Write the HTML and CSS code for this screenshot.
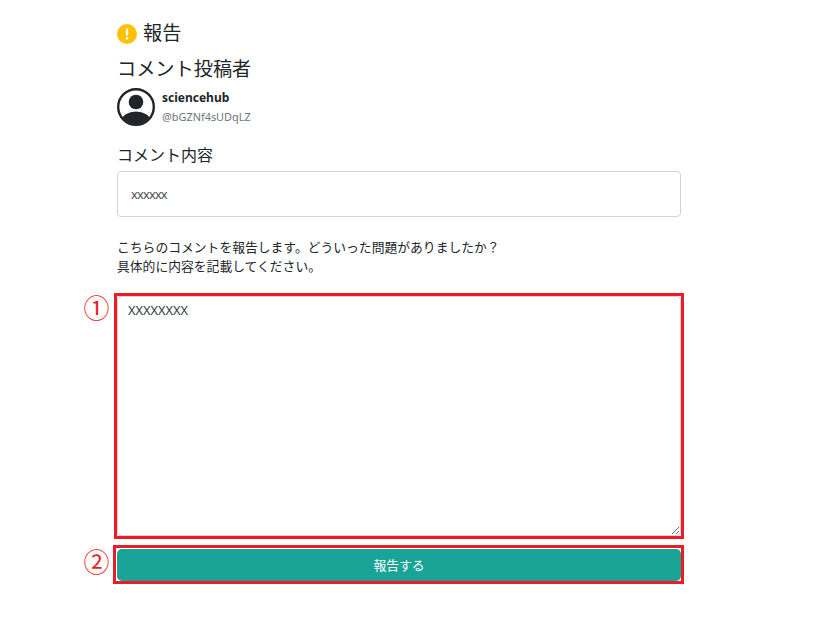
FILE: index.html
```html
<!DOCTYPE html>
<html lang="ja">
<head>
<meta charset="utf-8">
<title>報告</title>
<link rel="stylesheet" href="styles.css">
</head>
<body>
<main class="page">
  <h1 class="title">
    <svg class="warn" viewBox="0 0 20 20" aria-hidden="true"><circle cx="10" cy="10" r="10" fill="#ffc107"/><rect x="8.9" y="4.6" width="2.2" height="7.2" rx="1" fill="#fff"/><circle cx="10" cy="14.4" r="1.3" fill="#fff"/></svg>
    <span class="title-text">報告</span>
  </h1>
  <h2 class="subtitle">コメント投稿者</h2>
  <div class="user">
    <svg class="avatar" viewBox="0 0 38 38" aria-hidden="true">
      <defs><clipPath id="c"><circle cx="19" cy="19" r="17"/></clipPath></defs>
      <circle cx="19" cy="19" r="17.8" fill="#fff" stroke="#212529" stroke-width="2.4"/>
      <circle cx="19" cy="14" r="7.3" fill="#212529"/>
      <ellipse cx="19" cy="33" rx="14.5" ry="9.5" fill="#212529" clip-path="url(#c)"/>
    </svg>
    <div class="names">
      <div class="name">sciencehub</div>
      <div class="handle">@bGZNf4sUDqLZ</div>
    </div>
  </div>
  <h3 class="label">コメント内容</h3>
  <div class="quote">xxxxxx</div>
  <p class="help">こちらのコメントを報告します。どういった問題がありましたか？<br>具体的に内容を記載してください。</p>
  <div class="field">
    <span class="num num-a">①</span>
    <textarea class="report">XXXXXXXX</textarea>
  </div>
  <div class="action">
    <span class="num num-b">②</span>
    <button class="submit" type="button">報告する</button>
  </div>
</main>
</body>
</html>
```

FILE: styles.css
```css
* { box-sizing: border-box; }
html, body { margin: 0; background: #fff; }
body {
  font-family: "Noto Sans", "Noto Sans CJK JP", sans-serif;
  color: #212529;
  font-size: 12.8px;
}
.page {
  width: 564px;
  margin-left: 117px;
  padding-top: 20px;
  display: flex;
  flex-direction: column;
}
.title {
  margin: 0;
  display: flex;
  align-items: center;
  gap: 6px;
  height: 28px;
  font-size: 19.2px;
  font-weight: 400;
  line-height: 26px;
}
.title-text { display: block; height: 28px; }
.warn { width: 20px; height: 20px; }
.subtitle {
  margin: 7px 0 0;
  font-size: 19.2px;
  font-weight: 400;
  line-height: 28px;
}
.user {
  display: flex;
  gap: 7px;
  margin-top: 5px;
  height: 38px;
}
.avatar { width: 38px; height: 38px; flex: none; }
.names { display: flex; flex-direction: column; }
.name { font-size: 12px; font-weight: 700; line-height: 18px; margin-top: 1px; }
.handle { font-size: 10.9px; color: #6c757d; line-height: 16px; margin-top: 2px; }
.label {
  margin: 17px 0 0;
  font-size: 16px;
  font-weight: 400;
  line-height: 24px;
}
.quote {
  margin-top: 4px;
  height: 46px;
  border: 1px solid #d3d3d3;
  border-radius: 4px;
  padding: 0 13px;
  line-height: 44px;
  font-size: 12.8px;
  letter-spacing: -0.8px;
  color: #495057;
}
.help {
  margin: 21px 0 0;
  font-size: 12.8px;
  line-height: 19px;
}
.field {
  position: relative;
  width: 570px;
  margin: 17px 0 0 -3px;
  border: 3px solid #ed1c24;
}
.report {
  display: block;
  width: 100%;
  height: 240px;
  padding: 4px 10px;
  border: 1px solid #ced4da;
  border-radius: 4px;
  font-family: inherit;
  font-size: 12.8px;
  line-height: 19px;
  color: #343a40;
  background: #fff;
}
.action {
  position: relative;
  width: 571px;
  margin: 6px 0 0 -4px;
  padding: 1px 0 0 1px;
  border: 3px solid #ed1c24;
}
.submit {
  display: block;
  width: 564px;
  height: 32px;
  padding: 0 0 2px;
  border: 0;
  border-radius: 5px;
  background: #19a497;
  color: #fff;
  font-family: inherit;
  font-size: 12.8px;
  cursor: pointer;
}
.num {
  position: absolute;
  width: 26px;
  text-align: center;
  font-family: "Noto Sans CJK JP", sans-serif;
  font-size: 26px;
  line-height: 26px;
  color: #ed1c24;
}
.num-a { left: -33.5px; top: -2px; }
.num-b { left: -32.5px; top: 0; }
```
